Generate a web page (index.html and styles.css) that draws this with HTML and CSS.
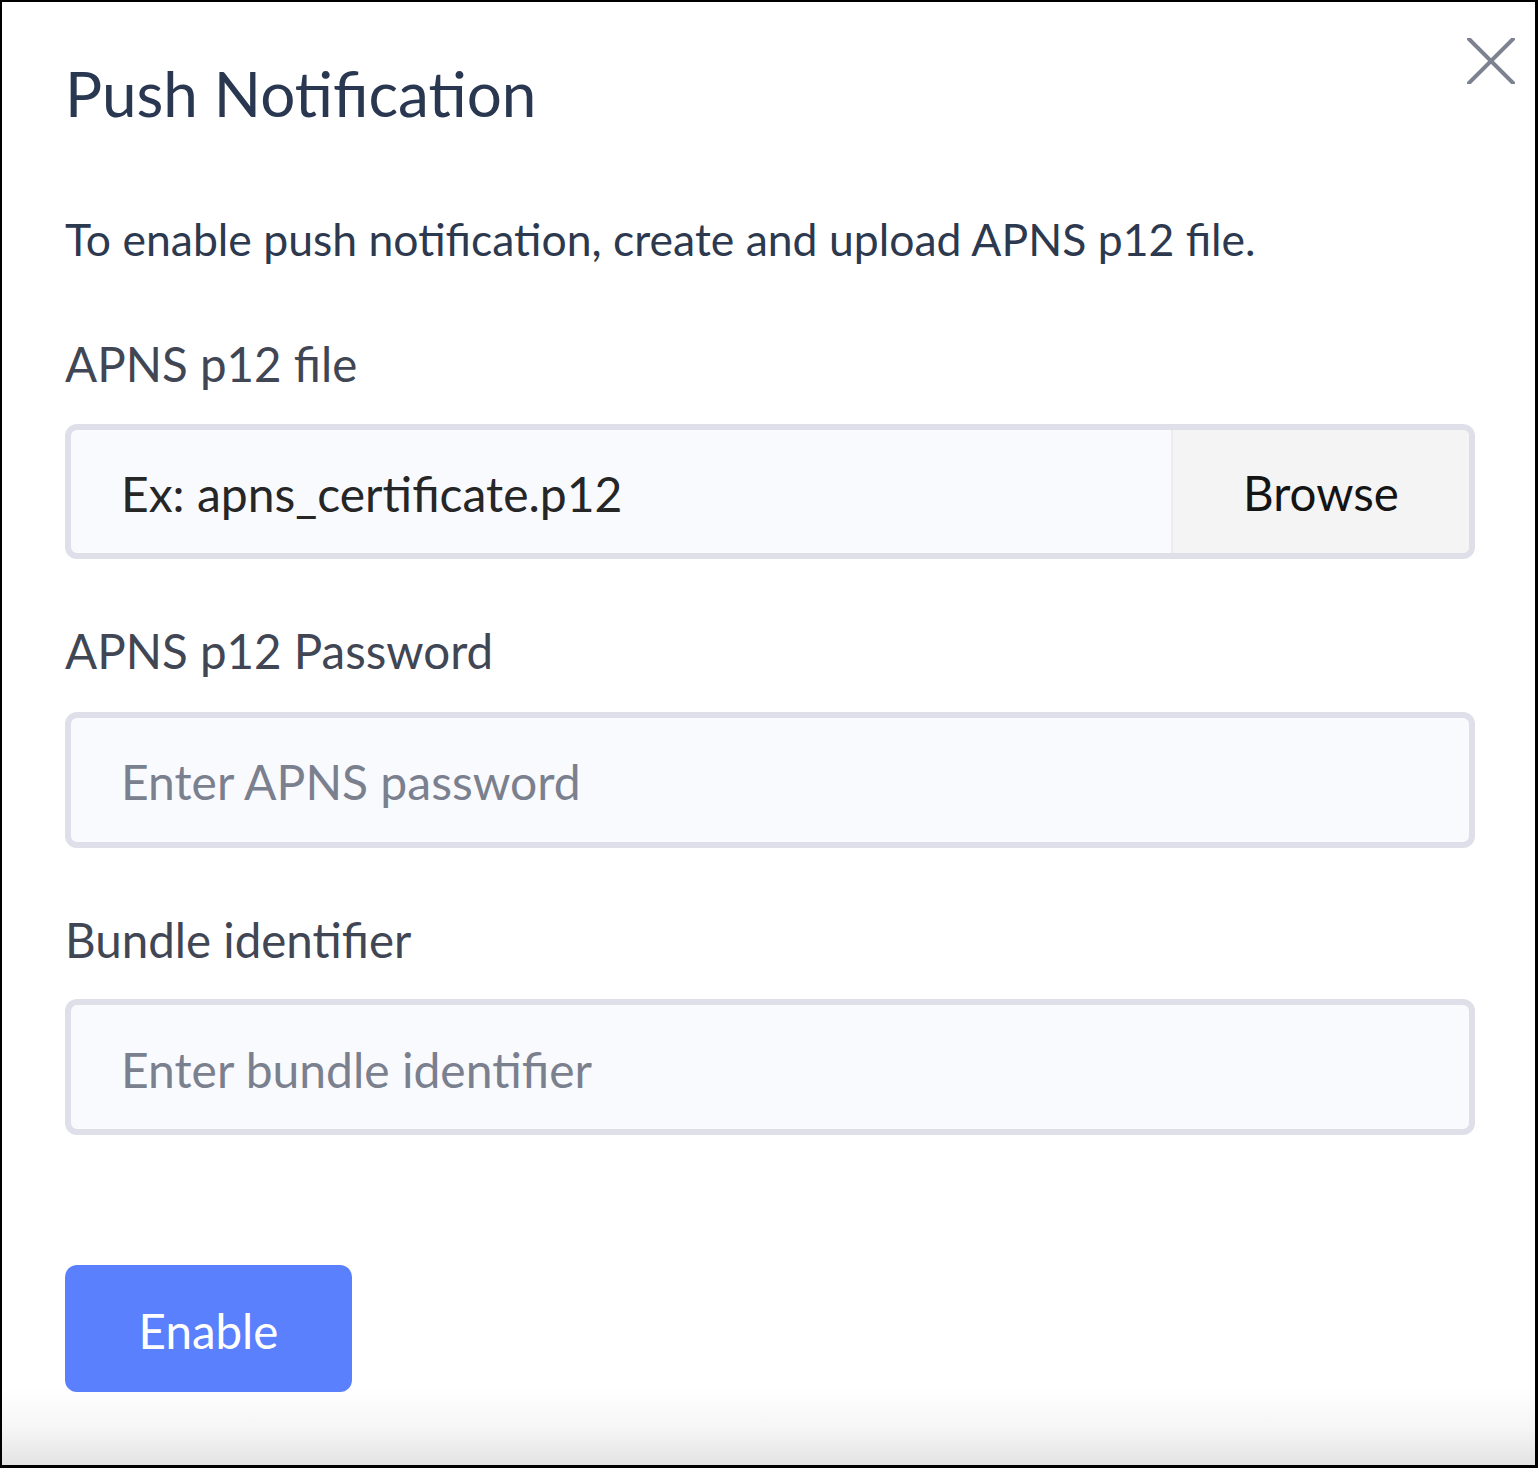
FILE: index.html
```html
<!DOCTYPE html>
<html lang="en">
<head>
<meta charset="utf-8">
<title>Push Notification</title>
<link rel="stylesheet" href="styles.css">
</head>
<body>
<div class="frame">
  <div class="modal">
    <div class="header">
      <h1 class="title">Push Notification</h1>
      <button class="close" aria-label="Close">
        <svg width="48" height="46" viewBox="0 0 48 46"><path d="M2 1 L46 45 M46 1 L2 45" stroke="#7d8291" stroke-width="4" fill="none" stroke-linecap="round"/></svg>
      </button>
    </div>
    <p class="desc">To enable push notification, create and upload APNS p12 file.</p>

    <label class="label label-first">APNS p12 file</label>
    <div class="field field-file">
      <span class="value">Ex: apns_certificate.p12</span>
      <span class="browse">Browse</span>
    </div>

    <label class="label">APNS p12 Password</label>
    <div class="field">
      <span class="placeholder">Enter APNS password</span>
    </div>

    <label class="label label-last">Bundle identifier</label>
    <div class="field">
      <span class="placeholder">Enter bundle identifier</span>
    </div>

    <button class="enable">Enable</button>
  </div>
</div>
</body>
</html>
```

FILE: styles.css
```css
* { box-sizing: border-box; }
html, body { margin: 0; padding: 0; }
body {
  width: 1538px;
  height: 1468px;
  background: #000;
  font-family: Lato, "Open Sans", sans-serif;
}
.frame {
  width: 1538px;
  height: 1468px;
  border-style: solid;
  border-color: #000;
  border-width: 2px 3px 3px 2px;
  background: linear-gradient(to bottom, #ffffff 0, #ffffff 1385px, #f6f6f6 1425px, #e3e3e3 100%);
  overflow: hidden;
}
.modal {
  padding: 0 60px 0 63px;
}
.header {
  display: flex;
  justify-content: space-between;
  align-items: flex-start;
  margin-right: -40px;
  padding-top: 36px;
}
.title {
  margin: 24px 0 0 0;
  font-size: 62px;
  line-height: 62px;
  font-weight: 400;
  color: #293750;
}
.close {
  border: 0;
  background: none;
  padding: 0;
  margin: 0;
  width: 48px;
  height: 46px;
  display: block;
}
.close svg { display: block; }
.desc {
  margin: 93px 0 0 0;
  font-size: 44.5px;
  line-height: 44.5px;
  color: #2d394e;
}
.label {
  display: block;
  margin: 68px 0 0 0;
  font-size: 47.5px;
  line-height: 47.5px;
  color: #414654;
}
.label-first { margin-top: 78px; }
.field {
  margin-top: 37px;
  height: 136px;
  border: 6px solid #dfdfe9;
  border-radius: 12px;
  background: #f9fafe;
  display: flex;
  align-items: stretch;
  overflow: hidden;
  font-size: 48px;
}
.label-last + .field { margin-top: 36px; }
.field .value, .field .placeholder {
  flex: 1;
  display: flex;
  align-items: center;
  padding: 4px 0 0 50px;
}
.value { color: #262626; }
.placeholder { color: #7b808e; }
.field-file { height: 135px; }
.browse {
  width: 298px;
  border-left: 2px solid #ebebf0;
  background: #f4f4f4;
  color: #141414;
  display: flex;
  align-items: center;
  justify-content: center;
  font-size: 47.5px;
  padding-top: 2px;
}
.enable {
  display: block;
  margin-top: 130px;
  width: 287px;
  height: 127px;
  border: 0;
  border-radius: 12px;
  background: #5a80fe;
  color: #ffffff;
  font-family: Lato, "Open Sans", sans-serif;
  font-size: 47.5px;
  padding: 4px 0 0 0;
}
```
